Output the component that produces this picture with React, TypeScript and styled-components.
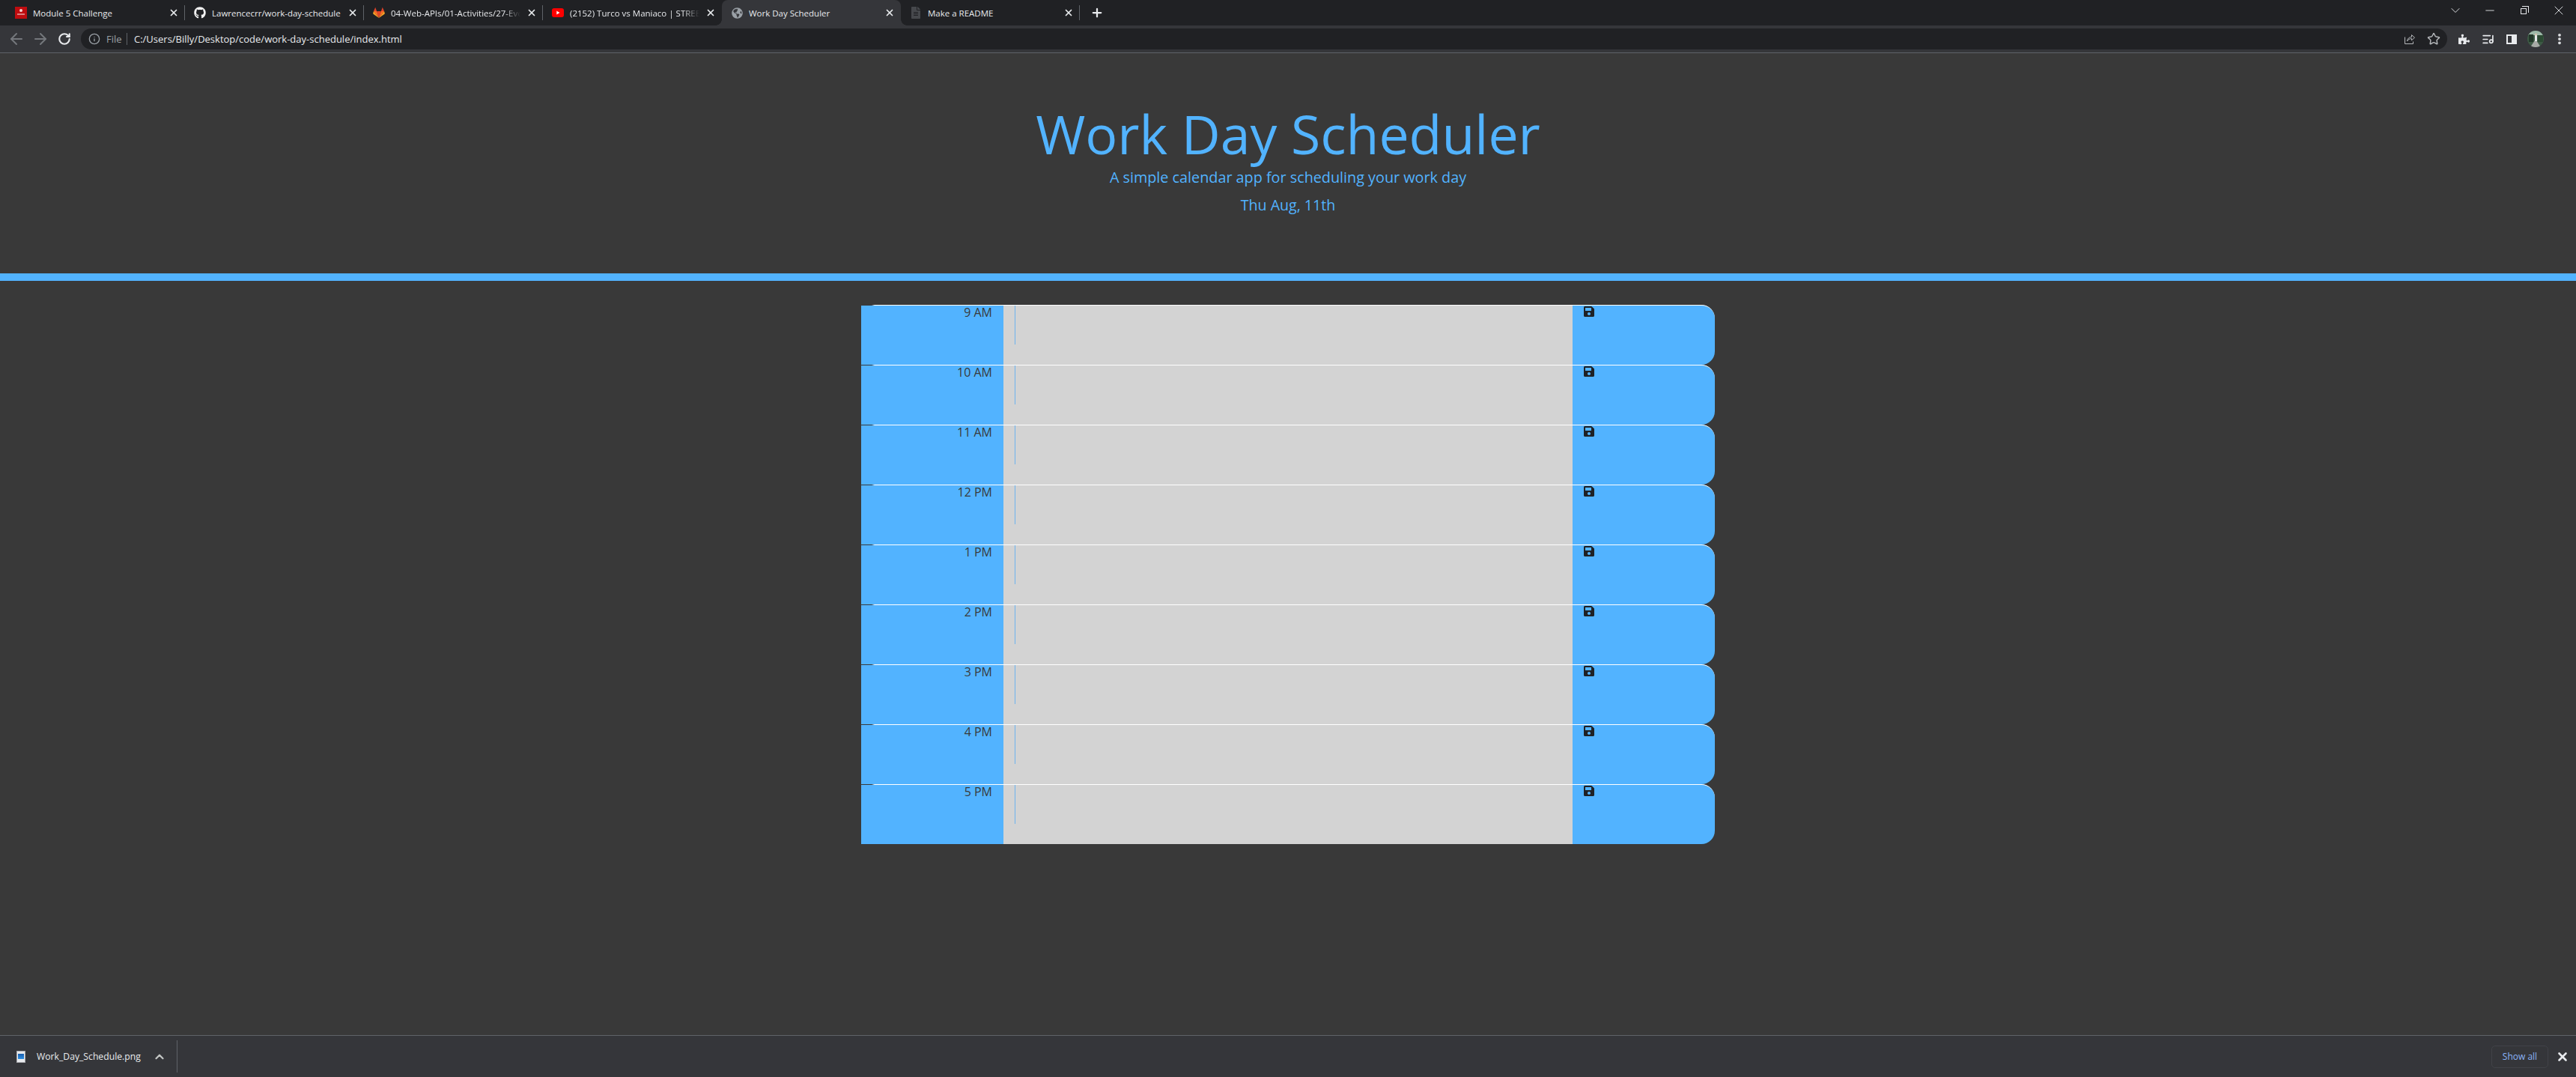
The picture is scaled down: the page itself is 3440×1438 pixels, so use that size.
import React from "react";
import styled, { createGlobalStyle } from "styled-components";
import { FaGithub, FaGlobeAmericas, FaFileAlt, FaSave, FaPuzzlePiece } from "react-icons/fa";
import {
  ArrowLeft,
  ArrowRight,
  RotateCw,
  Info,
  Star,
  X,
  Plus,
  ChevronDown,
  ChevronUp,
  Minus,
  EllipsisVertical,
  ListMusic,
} from "lucide-react";

const GlobalStyle = createGlobalStyle`
  html, body {
    margin: 0;
    padding: 0;
    height: 100%;
    background: #393939;
    overflow: hidden;
  }
  #root {
    height: 100%;
  }
  * {
    box-sizing: border-box;
  }
`;

const Page = styled.div`
  height: 1438px;
  display: flex;
  flex-direction: column;
  background: #393939;
  font-family: "Open Sans", sans-serif;
`;

const TabStrip = styled.div`
  height: 34px;
  flex: none;
  display: flex;
  align-items: stretch;
  padding-left: 8px;
  background: #202124;
  font-size: 11.5px;
  color: #e8eaed;
`;

const Tab = styled.div<{ $active?: boolean; $divider?: boolean }>`
  position: relative;
  width: 239px;
  display: flex;
  align-items: center;
  padding: 0 8px 0 12px;
  gap: 8px;
  border-radius: 8px 8px 0 0;
  background: ${(p) => (p.$active ? "#35363a" : "transparent")};

  &::before {
    content: "";
    display: ${(p) => (p.$active ? "block" : "none")};
    position: absolute;
    left: -8px;
    right: -8px;
    bottom: 0;
    height: 8px;
    z-index: 0;
    background:
      radial-gradient(circle at 0 0, transparent 7.5px, #35363a 8px) left bottom / 8px 8px no-repeat,
      radial-gradient(circle at 100% 0, transparent 7.5px, #35363a 8px) right bottom / 8px 8px no-repeat;
  }

  &::after {
    content: "";
    display: ${(p) => (p.$divider ? "block" : "none")};
    position: absolute;
    right: 0;
    top: 7px;
    bottom: 7px;
    width: 1px;
    background: #5f6368;
  }
`;

const Favicon = styled.span`
  width: 16px;
  height: 16px;
  flex: none;
  display: flex;
  align-items: center;
  justify-content: center;
`;

const UniversitySeal = styled.span`
  width: 16px;
  height: 16px;
  display: flex;
  flex-direction: column;
  align-items: center;
  gap: 2px;
  padding-top: 3px;
  background: #bf0d10;
`;

const SealMark = styled.span`
  width: 4px;
  height: 4px;
  border-radius: 50%;
  background: #f3d6d6;
`;

const SealLine = styled.span`
  width: 10px;
  height: 2px;
  background: #dc7f7f;
`;

const TabTitle = styled.span<{ $fade?: boolean }>`
  flex: 1;
  min-width: 0;
  white-space: nowrap;
  overflow: hidden;
  ${(p) =>
    p.$fade &&
    `-webkit-mask-image: linear-gradient(to right, #000 calc(100% - 22px), transparent);
     mask-image: linear-gradient(to right, #000 calc(100% - 22px), transparent);`}
`;

const TabClose = styled(X)`
  width: 14px;
  height: 14px;
  flex: none;
  color: #e8eaed;
  stroke-width: 3;
`;

const NewTab = styled(Plus)`
  width: 18px;
  height: 18px;
  margin: 8px 0 0 14px;
  color: #e8eaed;
  stroke-width: 3;
`;

const WindowControls = styled.div`
  margin-left: auto;
  display: flex;
  height: 28px;
  color: #e8eaed;
`;

const WindowButton = styled.span`
  width: 46px;
  display: flex;
  align-items: center;
  justify-content: center;
`;

const RestoreIcon = styled.span`
  position: relative;
  width: 8px;
  height: 8px;
  margin: 2px 2px 0 0;
  border: 1px solid #e8eaed;

  &::after {
    content: "";
    position: absolute;
    top: -4px;
    right: -4px;
    width: 8px;
    height: 8px;
    border-top: 1px solid #e8eaed;
    border-right: 1px solid #e8eaed;
  }
`;

const Toolbar = styled.div`
  height: 37px;
  flex: none;
  display: flex;
  align-items: center;
  padding-left: 6px;
  background: #35363a;
  border-bottom: 1px solid #5f6368;
`;

const NavIcon = styled.span<{ $on?: boolean }>`
  width: 32px;
  display: flex;
  justify-content: center;
  color: ${(p) => (p.$on ? "#e8eaed" : "#74777c")};
`;

const Omnibox = styled.div`
  width: 3160px;
  height: 28px;
  margin-left: 6px;
  flex: none;
  display: flex;
  align-items: center;
  padding: 0 9px 0 10px;
  border-radius: 14px;
  background: #202124;
  font-size: 13px;
  color: #e8eaed;
`;

const SiteInfo = styled(Info)`
  color: #9aa0a6;
`;

const FileLabel = styled.span`
  width: 28px;
  margin-left: 8px;
  color: #9aa0a6;
  border-right: 1px solid #5f6368;
  line-height: 16px;
`;

const Address = styled.span`
  margin-left: 9px;
`;

const OmniboxEnd = styled.div`
  margin-left: auto;
  display: flex;
  align-items: center;
  gap: 15px;
  color: #b4b7ba;
`;

const ToolbarEnd = styled.div`
  margin-left: 6px;
  display: flex;
  color: #e8eaed;
`;

const ToolSlot = styled.span`
  width: 32px;
  height: 24px;
  display: flex;
  align-items: center;
  justify-content: center;
`;

const SidePanelIcon = styled.span`
  width: 14px;
  height: 13px;
  border: 2px solid #e8eaed;
  background: #e8eaed;
`;

const SidePanelGap = styled.span`
  display: block;
  width: 5px;
  height: 100%;
  background: #35363a;
`;

const Main = styled.main`
  flex: 1;
  min-height: 0;
  display: flex;
  flex-direction: column;
  align-items: center;
`;

const Jumbotron = styled.header`
  width: 100%;
  height: 304px;
  flex: none;
  display: flex;
  flex-direction: column;
  align-items: center;
  padding-top: 64px;
  border-bottom: 10px solid #52b3ff;
  color: #52b3ff;
`;

const Title = styled.h1`
  margin: 0;
  font-size: 71.6px;
  line-height: 86px;
  font-weight: 400;
`;

const Lead = styled.p`
  margin: 1px 0 0;
  font-size: 19.8px;
  line-height: 30px;
  font-weight: 400;
`;

const CurrentDay = styled.p`
  margin: 7px 0 0;
  font-size: 19.6px;
  line-height: 30px;
  font-weight: 400;
`;

const Schedule = styled.section`
  width: 1140px;
  margin-top: 32px;
`;

const TimeRow = styled.div`
  height: 80px;
  display: grid;
  grid-template-columns: 190px 760px 190px;
`;

const Hour = styled.div`
  position: relative;
  padding-right: 15px;
  text-align: right;
  font-size: 16px;
  line-height: 18px;
  color: #393939;
  background: #52b3ff;
  border-top: 1px solid #fff;

  &::before {
    content: "";
    position: absolute;
    left: 0;
    top: -1px;
    width: 18px;
    height: 1px;
    background: linear-gradient(to right, #393939 14px, transparent);
  }
`;

const Notes = styled.div`
  display: flex;
  padding-left: 15px;
  background: #d3d3d3;
  border-top: 1px solid #fff;
`;

const Cursor = styled.span`
  width: 1px;
  height: 52px;
  background: #6db3ee;
`;

const SaveButton = styled.div`
  padding-left: 14px;
  background: #52b3ff;
  border-top: 1px solid #fff;
  border-radius: 0 18px 18px 0;
  color: #1f2125;
  font-size: 16px;

  svg {
    display: block;
    width: 16px;
    height: 16px;
  }
`;

const DownloadBar = styled.footer`
  height: 56px;
  flex: none;
  display: flex;
  align-items: center;
  padding: 0 9px 0 22px;
  background: #35363a;
  border-top: 1px solid #5f6368;
  color: #e8eaed;
  font-size: 12.2px;
`;

const FileThumb = styled.span`
  width: 12px;
  height: 16px;
  display: flex;
  align-items: center;
  justify-content: center;
  background: #e8eaed;
  border: 1px solid #a9abaf;
`;

const ThumbImage = styled.span`
  width: 8px;
  height: 7px;
  background: linear-gradient(#1a5fb0, #2f8fe0);
`;

const DownloadName = styled.span`
  margin-left: 15px;
`;

const Expand = styled(ChevronUp)`
  width: 18px;
  height: 18px;
  margin-left: 16px;
  stroke-width: 3;
  color: #c4c7c5;
`;

const ShelfDivider = styled.span`
  width: 1px;
  height: 43px;
  margin-left: 14px;
  background: #5f6368;
`;

const ShowAll = styled.span`
  width: 76px;
  height: 30px;
  margin-left: auto;
  display: flex;
  align-items: center;
  justify-content: center;
  border: 1px solid #424348;
  border-radius: 5px;
  font-size: 12px;
  color: #8ab4f8;
`;

const ShelfClose = styled(X)`
  width: 18px;
  height: 18px;
  margin-left: 10px;
  stroke-width: 3.5;
  color: #e8eaed;
`;

function GitlabIcon() {
  return (
    <svg width="16" height="16" viewBox="0 0 25 24">
      <polygon points="12.5,23 8,9 17,9" fill="#e24329" />
      <polygon points="12.5,23 8,9 1.5,9" fill="#fc6d26" />
      <polygon points="12.5,23 17,9 23.5,9" fill="#fc6d26" />
      <polygon points="1.5,9 0.3,13 0.8,14.6 12.5,23" fill="#fca326" />
      <polygon points="23.5,9 24.7,13 24.2,14.6 12.5,23" fill="#fca326" />
      <polygon points="1.5,9 8,9 5,0.5" fill="#e24329" />
      <polygon points="23.5,9 17,9 20,0.5" fill="#e24329" />
    </svg>
  );
}

function YoutubeIcon() {
  return (
    <svg width="16" height="12" viewBox="0 0 16 12">
      <rect width="16" height="12" rx="3" fill="#f00" />
      <polygon points="6.3,3.6 10.5,6 6.3,8.4" fill="#fff" />
    </svg>
  );
}

function ShareIcon() {
  return (
    <svg width="16" height="16" viewBox="0 0 16 16" fill="none" stroke="currentColor">
      <path d="M1.5 5.5v9h11v-3" />
      <path d="M4.5 11c.4-3.6 3-5.6 6-5.6V2.6l4 3.6-4 3.6V7.6c-2.6 0-4.6 1-6 3.4z" />
    </svg>
  );
}

function AvatarPhoto() {
  return (
    <svg width="22" height="22" viewBox="0 0 22 22">
      <clipPath id="avatar-clip">
        <circle cx="11" cy="11" r="11" />
      </clipPath>
      <g clipPath="url(#avatar-clip)">
        <rect width="22" height="22" fill="#3d5a45" />
        <rect width="22" height="6" fill="#9db8a8" />
        <rect x="2" y="5" width="6" height="10" fill="#23382a" />
        <rect x="14" y="6" width="7" height="9" fill="#2c4a33" />
        <polygon points="9,22 13,22 18,22 12,13 10,13 4,22" fill="#a7aaa6" />
        <rect x="10" y="6" width="3" height="8" fill="#e6e9ea" />
        <circle cx="11.5" cy="5" r="1.5" fill="#d7c5b0" />
      </g>
    </svg>
  );
}

const tabs = [
  { title: "Module 5 Challenge", icon: <UniversitySeal><SealMark /><SealLine /></UniversitySeal>, divider: true },
  { title: "Lawrencecrr/work-day-schedule", icon: <FaGithub size={16} color="#f1f1f1" />, divider: true },
  { title: "04-Web-APIs/01-Activities/27-Eve", icon: <GitlabIcon />, divider: true, fade: true },
  { title: "(2152) Turco vs Maniaco | STREET", icon: <YoutubeIcon />, fade: true },
  { title: "Work Day Scheduler", icon: <FaGlobeAmericas size={15} color="#9aa0a6" />, active: true },
  { title: "Make a README", icon: <FaFileAlt size={16} color="#46484c" />, divider: true },
];

const hours = ["9 AM", "10 AM", "11 AM", "12 PM", "1 PM", "2 PM", "3 PM", "4 PM", "5 PM"];

export default function App() {
  return (
    <Page>
      <GlobalStyle />
      <TabStrip>
        {tabs.map((tab) => (
          <Tab key={tab.title} $active={tab.active} $divider={tab.divider}>
            <Favicon>{tab.icon}</Favicon>
            <TabTitle $fade={tab.fade}>{tab.title}</TabTitle>
            <TabClose />
          </Tab>
        ))}
        <NewTab />
        <WindowControls>
          <WindowButton><ChevronDown size={20} strokeWidth={1.1} /></WindowButton>
          <WindowButton><Minus size={18} strokeWidth={1.2} /></WindowButton>
          <WindowButton><RestoreIcon /></WindowButton>
          <WindowButton><X size={20} strokeWidth={1.1} /></WindowButton>
        </WindowControls>
      </TabStrip>
      <Toolbar>
        <NavIcon><ArrowLeft size={24} strokeWidth={2} /></NavIcon>
        <NavIcon><ArrowRight size={24} strokeWidth={2} /></NavIcon>
        <NavIcon $on><RotateCw size={18} strokeWidth={2.8} /></NavIcon>
        <Omnibox>
          <SiteInfo size={16} />
          <FileLabel>File</FileLabel>
          <Address>C:/Users/Billy/Desktop/code/work-day-schedule/index.html</Address>
          <OmniboxEnd>
            <ShareIcon />
            <Star size={18} strokeWidth={2} />
          </OmniboxEnd>
        </Omnibox>
        <ToolbarEnd>
          <ToolSlot><FaPuzzlePiece size={15} /></ToolSlot>
          <ToolSlot><ListMusic size={17} strokeWidth={2.4} /></ToolSlot>
          <ToolSlot><SidePanelIcon><SidePanelGap /></SidePanelIcon></ToolSlot>
          <ToolSlot><AvatarPhoto /></ToolSlot>
          <ToolSlot><EllipsisVertical size={18} strokeWidth={3} /></ToolSlot>
        </ToolbarEnd>
      </Toolbar>
      <Main>
        <Jumbotron>
          <Title>Work Day Scheduler</Title>
          <Lead>A simple calendar app for scheduling your work day</Lead>
          <CurrentDay>Thu Aug, 11th</CurrentDay>
        </Jumbotron>
        <Schedule>
          {hours.map((hour) => (
            <TimeRow key={hour}>
              <Hour>{hour}</Hour>
              <Notes><Cursor /></Notes>
              <SaveButton><FaSave /></SaveButton>
            </TimeRow>
          ))}
        </Schedule>
      </Main>
      <DownloadBar>
        <FileThumb><ThumbImage /></FileThumb>
        <DownloadName>Work_Day_Schedule.png</DownloadName>
        <Expand />
        <ShelfDivider />
        <ShowAll>Show all</ShowAll>
        <ShelfClose />
      </DownloadBar>
    </Page>
  );
}
